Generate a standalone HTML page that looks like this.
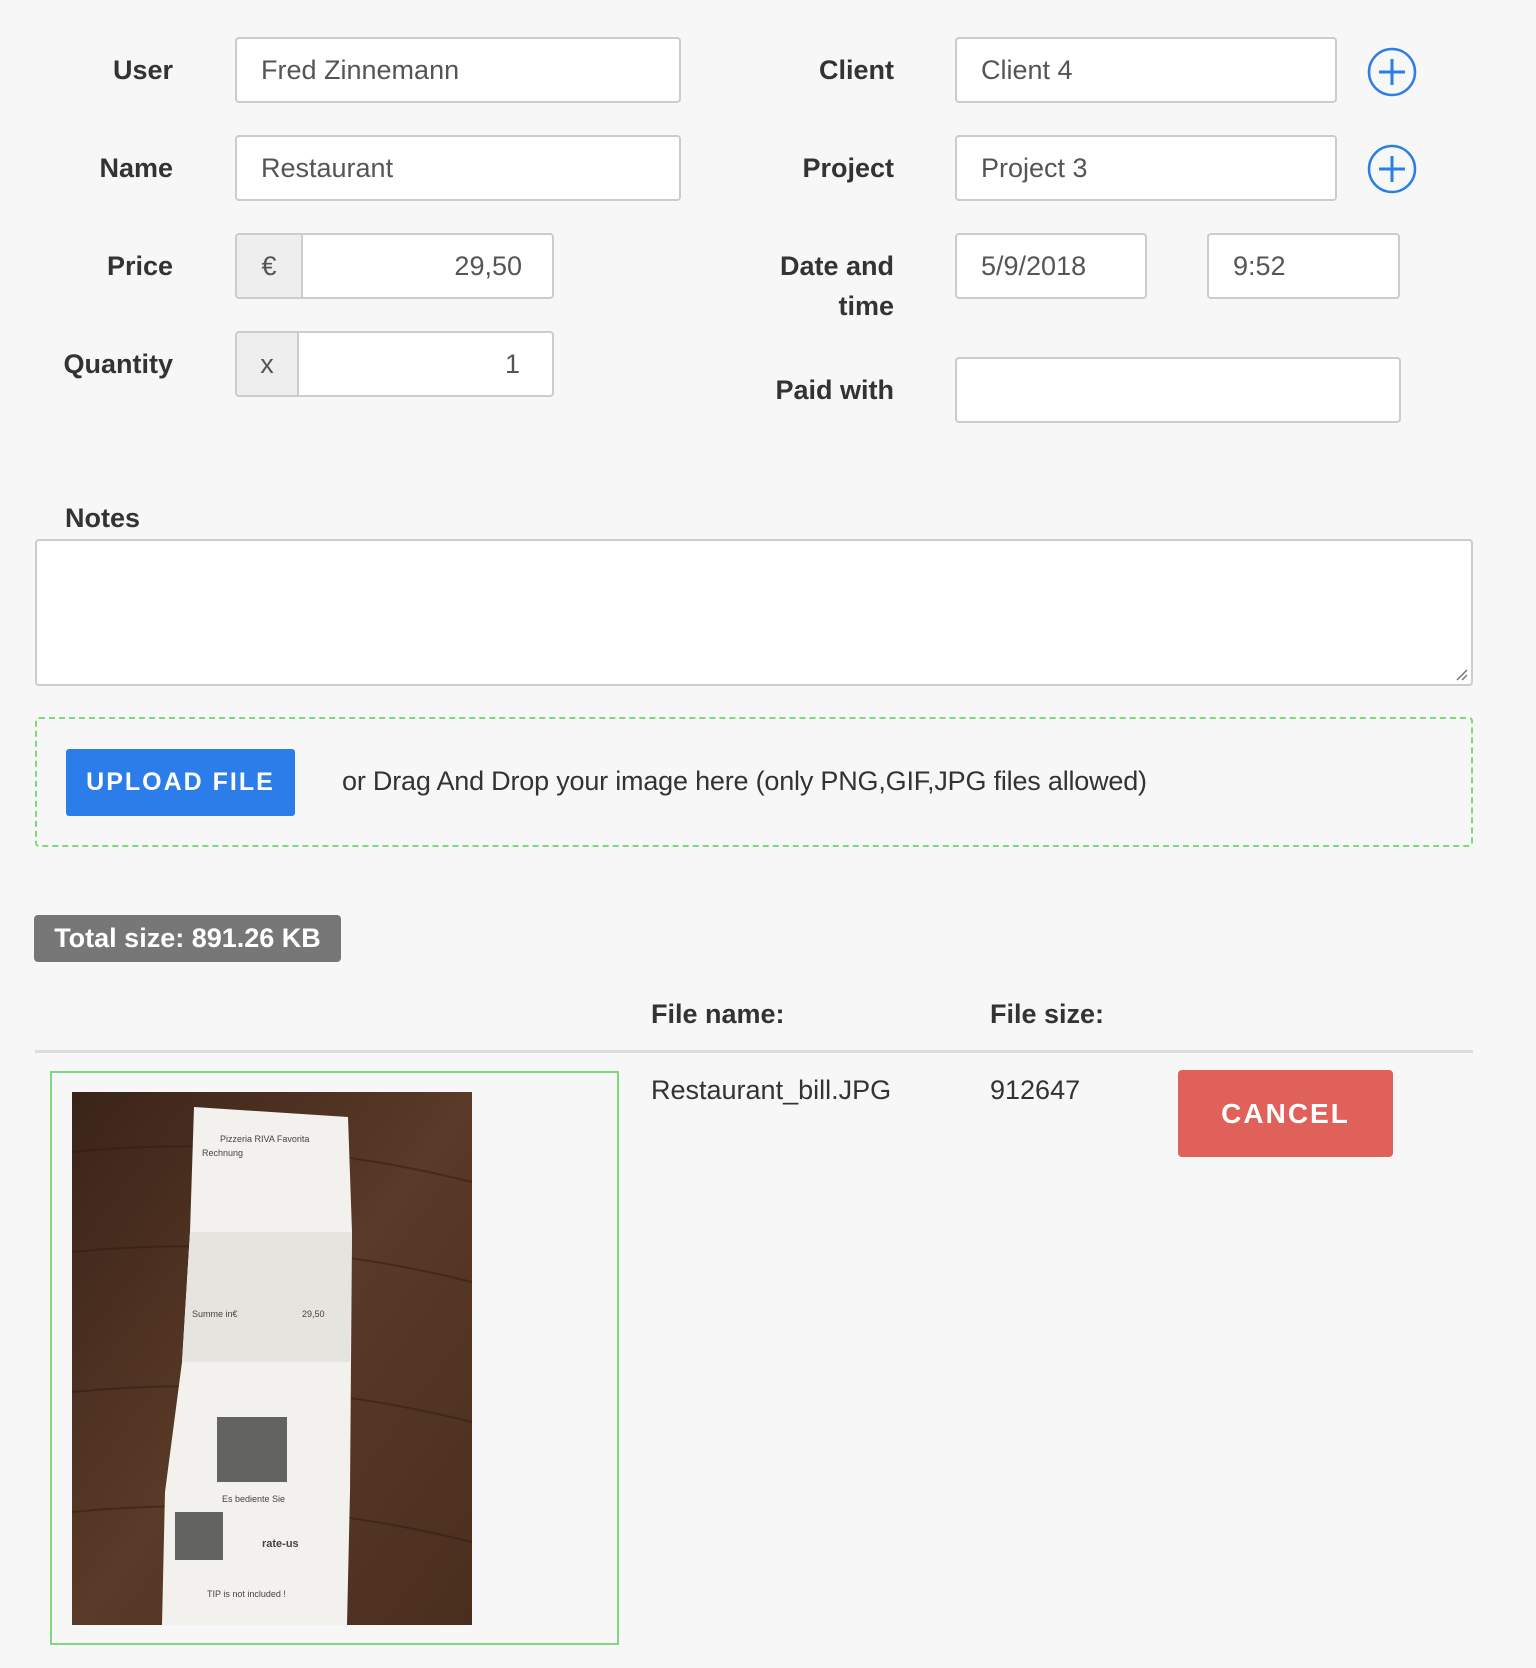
<!DOCTYPE html>
<html><head><meta charset="utf-8"><style>
*{box-sizing:border-box;margin:0;padding:0}
body{width:1536px;height:1668px;background:#f7f7f7;font-family:"Liberation Sans",sans-serif;position:relative;overflow:hidden;color:#333}
.a{position:absolute}
.lbl{position:absolute;font-weight:bold;font-size:27px;color:#333;text-align:right;line-height:40px}
.in{position:absolute;background:#fff;border:2px solid #ccc;border-radius:4px;font-size:27px;color:#555;padding-left:24px;display:flex;align-items:center}
.add{position:absolute;background:#eee;border:2px solid #ccc;border-radius:4px 0 0 4px;font-size:27px;color:#555;display:flex;align-items:center;justify-content:center}
</style></head><body>
<div class="lbl" style="right:1363px;top:50px">User</div>
<div class="in" style="left:235px;top:37px;width:446px;height:66px">Fred Zinnemann</div>
<div class="lbl" style="right:1363px;top:148px">Name</div>
<div class="in" style="left:235px;top:135px;width:446px;height:66px">Restaurant</div>
<div class="lbl" style="right:1363px;top:246px">Price</div>
<div class="add" style="left:235px;top:233px;width:68px;height:66px">€</div>
<div class="in" style="left:301px;top:233px;width:253px;height:66px;border-radius:0 4px 4px 0;justify-content:flex-end;padding-right:30px">29,50</div>
<div class="lbl" style="right:1363px;top:344px">Quantity</div>
<div class="add" style="left:235px;top:331px;width:64px;height:66px">x</div>
<div class="in" style="left:297px;top:331px;width:257px;height:66px;border-radius:0 4px 4px 0;justify-content:flex-end;padding-right:32px">1</div>

<div class="lbl" style="right:642px;top:50px">Client</div>
<div class="in" style="left:955px;top:37px;width:382px;height:66px">Client 4</div>
<div class="lbl" style="right:642px;top:148px">Project</div>
<div class="in" style="left:955px;top:135px;width:382px;height:66px">Project 3</div>
<svg class="a" style="left:1366px;top:46px" width="52" height="52"><circle cx="26" cy="26" r="23" fill="none" stroke="#2b7de9" stroke-width="2.5"/><path d="M26 13V39M13 26H39" stroke="#2b7de9" stroke-width="3"/></svg>
<svg class="a" style="left:1366px;top:143px" width="52" height="52"><circle cx="26" cy="26" r="23" fill="none" stroke="#2b7de9" stroke-width="2.5"/><path d="M26 13V39M13 26H39" stroke="#2b7de9" stroke-width="3"/></svg>
<div class="lbl" style="right:642px;top:246px">Date and<br>time</div>
<div class="in" style="left:955px;top:233px;width:192px;height:66px">5/9/2018</div>
<div class="in" style="left:1207px;top:233px;width:193px;height:66px">9:52</div>
<div class="lbl" style="right:642px;top:370px">Paid with</div>
<div class="in" style="left:955px;top:357px;width:446px;height:66px"></div>

<div class="lbl" style="left:65px;top:498px;text-align:left">Notes</div>
<div class="a" style="left:35px;top:539px;width:1438px;height:147px;background:#fff;border:2px solid #ccc;border-radius:4px"></div>
<svg class="a" style="left:1455px;top:668px" width="14" height="14"><path d="M2 12L12 2M7 12L12 7" stroke="#777" stroke-width="1.5"/></svg>

<div class="a" style="left:35px;top:717px;width:1438px;height:130px;border:2px dashed #7ed87e;border-radius:4px"></div>
<div class="a" style="left:66px;top:749px;width:229px;height:67px;background:#2b7de9;border-radius:3px;color:#fff;font-weight:bold;font-size:25px;letter-spacing:2px;display:flex;align-items:center;justify-content:center">UPLOAD FILE</div>
<div class="a" style="left:342px;top:763px;font-size:27px;color:#333;line-height:36px;letter-spacing:-0.2px">or Drag And Drop your image here (only PNG,GIF,JPG files allowed)</div>

<div class="a" style="left:34px;top:915px;width:307px;height:47px;background:#777;border-radius:4px;color:#fff;font-weight:bold;font-size:27px;display:flex;align-items:center;justify-content:center">Total size: 891.26 KB</div>

<div class="a" style="left:651px;top:996px;font-weight:bold;font-size:27px;line-height:36px">File name:</div>
<div class="a" style="left:990px;top:996px;font-weight:bold;font-size:27px;line-height:36px">File size:</div>
<div class="a" style="left:35px;top:1050px;width:1438px;height:3px;background:#ddd"></div>

<div class="a" style="left:50px;top:1071px;width:569px;height:574px;border:2px solid #7ed87e"></div>
<svg class="a" style="left:72px;top:1092px" width="400" height="533">
<defs><linearGradient id="w" x1="0" y1="0" x2="1" y2="1"><stop offset="0" stop-color="#3a2418"/><stop offset=".5" stop-color="#5a3a28"/><stop offset="1" stop-color="#4a2e1e"/></linearGradient></defs>
<rect width="400" height="533" fill="url(#w)"/>
<g stroke="#2e1b11" stroke-width="2" opacity=".5" fill="none"><path d="M0 60Q200 40 400 90M0 160Q200 140 400 190M0 300Q200 280 400 330M0 420Q200 400 400 450"/></g>
<path d="M122 15L276 25L280 140L278 400L275 533L90 533L93 400L110 270L118 140Z" fill="#f2f1ee"/>
<path d="M118 140L280 140L278 270L110 270Z" fill="#e6e4df"/>
<g fill="#444" font-size="9" font-family="Liberation Sans"><text x="148" y="50">Pizzeria RIVA Favorita</text><text x="130" y="64">Rechnung</text><text x="120" y="225">Summe in€</text><text x="230" y="225">29,50</text><text x="150" y="410">Es bediente Sie</text><text x="190" y="455" font-weight="bold" font-size="11">rate-us</text><text x="135" y="505">TIP is not included !</text></g>
<rect x="145" y="325" width="70" height="65" fill="#333" opacity=".75"/>
<rect x="103" y="420" width="48" height="48" fill="#333" opacity=".75"/>
</svg>

<div class="a" style="left:651px;top:1072px;font-size:27px;line-height:36px">Restaurant_bill.JPG</div>
<div class="a" style="left:990px;top:1072px;font-size:27px;line-height:36px">912647</div>
<div class="a" style="left:1178px;top:1070px;width:215px;height:87px;background:#e0605a;border-radius:4px;color:#fff;font-weight:bold;font-size:28px;letter-spacing:2px;display:flex;align-items:center;justify-content:center">CANCEL</div>
</body></html>
